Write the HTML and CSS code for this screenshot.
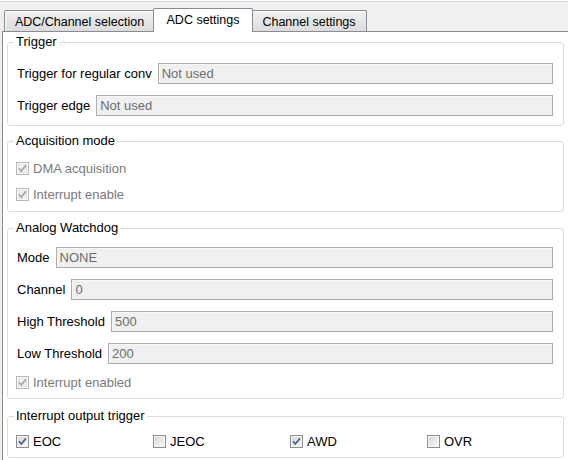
FILE: index.html
```html
<!DOCTYPE html>
<html>
<head>
<meta charset="utf-8">
<link rel="stylesheet" href="styles.css">
</head>
<body>
<div class="window">
  <div class="tabbar">
    <div class="tab tab-first">ADC/Channel selection</div>
    <div class="tab tab-active">ADC settings</div>
    <div class="tab tab-last">Channel settings</div>
  </div>
  <div class="pane">
    <fieldset class="group group-trigger">
      <legend>Trigger</legend>
      <div class="body body-trigger">
        <div class="field"><span class="lbl">Trigger for regular conv</span><div class="input">Not used</div></div>
        <div class="field"><span class="lbl">Trigger edge</span><div class="input">Not used</div></div>
      </div>
    </fieldset>
    <fieldset class="group group-acq">
      <legend>Acquisition mode</legend>
      <div class="body body-acq">
        <div class="check disabled"><svg class="cb" width="13" height="13" viewBox="0 0 13 13"><rect x="0.5" y="0.5" width="12" height="12" fill="#fbfbfb" stroke="#b8b8b8"/><rect x="2.5" y="2.5" width="8" height="8" fill="#f1f1f1" stroke="#e2e2e2"/><polyline points="3,6.3 5.3,9 10,3.4" fill="none" stroke="#a6a6a6" stroke-width="1.7"/></svg><span>DMA acquisition</span></div>
        <div class="check disabled"><svg class="cb" width="13" height="13" viewBox="0 0 13 13"><rect x="0.5" y="0.5" width="12" height="12" fill="#fbfbfb" stroke="#b8b8b8"/><rect x="2.5" y="2.5" width="8" height="8" fill="#f1f1f1" stroke="#e2e2e2"/><polyline points="3,6.3 5.3,9 10,3.4" fill="none" stroke="#a6a6a6" stroke-width="1.7"/></svg><span>Interrupt enable</span></div>
      </div>
    </fieldset>
    <fieldset class="group group-wd">
      <legend>Analog Watchdog</legend>
      <div class="body body-wd">
        <div class="field"><span class="lbl">Mode</span><div class="input">NONE</div></div>
        <div class="field"><span class="lbl">Channel</span><div class="input">0</div></div>
        <div class="field"><span class="lbl">High Threshold</span><div class="input">500</div></div>
        <div class="field"><span class="lbl">Low Threshold</span><div class="input">200</div></div>
        <div class="check disabled check-wd"><svg class="cb" width="13" height="13" viewBox="0 0 13 13"><rect x="0.5" y="0.5" width="12" height="12" fill="#fbfbfb" stroke="#b8b8b8"/><rect x="2.5" y="2.5" width="8" height="8" fill="#f1f1f1" stroke="#e2e2e2"/><polyline points="3,6.3 5.3,9 10,3.4" fill="none" stroke="#a6a6a6" stroke-width="1.7"/></svg><span>Interrupt enabled</span></div>
      </div>
    </fieldset>
    <fieldset class="group group-out">
      <legend>Interrupt output trigger</legend>
      <div class="body body-out">
        <div class="check"><svg class="cb" width="13" height="13" viewBox="0 0 13 13"><defs><linearGradient id="g1" x1="0" y1="0" x2="1" y2="1"><stop offset="0" stop-color="#d6d8da"/><stop offset="1" stop-color="#f8f8f8"/></linearGradient></defs><rect x="0.5" y="0.5" width="12" height="12" fill="#f4f4f4" stroke="#8e8f8f"/><rect x="2" y="2" width="9" height="9" fill="url(#g1)"/><polyline points="3,6.3 5.3,9 10,3.4" fill="none" stroke="#4a5f8f" stroke-width="1.7"/></svg><span>EOC</span></div>
        <div class="check"><svg class="cb" width="13" height="13" viewBox="0 0 13 13"><rect x="0.5" y="0.5" width="12" height="12" fill="#f4f4f4" stroke="#8e8f8f"/><rect x="2" y="2" width="9" height="9" fill="url(#g1)"/></svg><span>JEOC</span></div>
        <div class="check"><svg class="cb" width="13" height="13" viewBox="0 0 13 13"><rect x="0.5" y="0.5" width="12" height="12" fill="#f4f4f4" stroke="#8e8f8f"/><rect x="2" y="2" width="9" height="9" fill="url(#g1)"/><polyline points="3,6.3 5.3,9 10,3.4" fill="none" stroke="#4a5f8f" stroke-width="1.7"/></svg><span>AWD</span></div>
        <div class="check"><svg class="cb" width="13" height="13" viewBox="0 0 13 13"><rect x="0.5" y="0.5" width="12" height="12" fill="#f4f4f4" stroke="#8e8f8f"/><rect x="2" y="2" width="9" height="9" fill="url(#g1)"/></svg><span>OVR</span></div>
      </div>
    </fieldset>
  </div>
</div>
</body>
</html>
```
FILE: styles.css
```css
* { box-sizing: border-box; }
html, body { margin: 0; padding: 0; }
body {
  background: #f0f0f0;
  font-family: "Liberation Sans", Arial, sans-serif;
  font-size: 13px;
  color: #000;
  width: 568px;
  height: 460px;
  overflow: hidden;
}
.window {
  display: flex;
  flex-direction: column;
  height: 460px;
}
.tabbar {
  height: 31px;
  flex: none;
  display: flex;
  align-items: flex-end;
  padding-left: 4px;
  background: linear-gradient(#fafafa 0 1px, #d9d9d9 1px 2px, #f0f0f0 2px);
  position: relative;
  z-index: 1;
}
.tab {
  font-size: 12.5px;
  height: 21px;
  line-height: 21px;
  text-align: center;
  border: 1px solid #898c95;
  border-bottom: none;
  border-radius: 2px 2px 0 0;
  background: linear-gradient(#f2f2f2, #e6e6e6 50%, #dcdcdc);
  box-shadow: inset 1px 1px 0 #fbfbfb;
  white-space: nowrap;
}
.tab-first { width: 151px; padding-top: 1px; }
.tab-last { width: 116px; padding-top: 1px; }
.tab-active {
  width: 100px;
  height: 24px;
  line-height: 22px;
  margin: 0 -2px -1px -2px;
  background: #fff;
  box-shadow: none;
  position: relative;
  z-index: 2;
}
.pane {
  flex: 1;
  margin-left: 2px;
  background: #fff;
  border-top: 1px solid #898c95;
  border-left: 1px solid #898c95;
  padding: 3px 4px 0 4px;
  display: flex;
  flex-direction: column;
}
.group {
  margin: 0;
  padding: 0;
  border: 1px solid #d5dfe5;
  border-radius: 3px;
  min-width: 0;
}
.group legend {
  margin-left: 6px;
  padding: 0 2px;
  height: 14px;
  line-height: 14px;
}
.group-acq { margin-top: 8px; }
.group-wd { margin-top: 9px; }
.group-out { margin-top: 10px; }
.body {
  display: flex;
  flex-direction: column;
  padding-left: 9px;
  padding-right: 10px;
}
.body-trigger { padding-top: 14px; padding-bottom: 9px; gap: 11px; }
.body-acq { padding-top: 10px; padding-bottom: 7px; gap: 6px; padding-left: 8px; }
.body-wd { padding-top: 12px; padding-bottom: 6px; gap: 11px; }
.body-out {
  display: grid;
  grid-template-columns: repeat(4, 137px);
  padding: 8px 0 6px 8px;
}
.field {
  display: flex;
  align-items: center;
  gap: 6px;
  height: 21px;
}
.lbl { white-space: nowrap; }
.input {
  flex: 1;
  height: 21px;
  line-height: 19px;
  border: 1px solid #adadad;
  background: #f0f0f0;
  color: #6d6d6d;
  padding-left: 3px;
  box-shadow: inset 1px 1px 0 #f7f7f7;
}
.check {
  display: flex;
  align-items: center;
  gap: 4px;
  height: 20px;
  white-space: nowrap;
}
.check-wd { margin-left: -1px; margin-top: -3px; }
.cb { flex: none; display: block; }
.check.disabled { color: #7a7a7a; }
```
